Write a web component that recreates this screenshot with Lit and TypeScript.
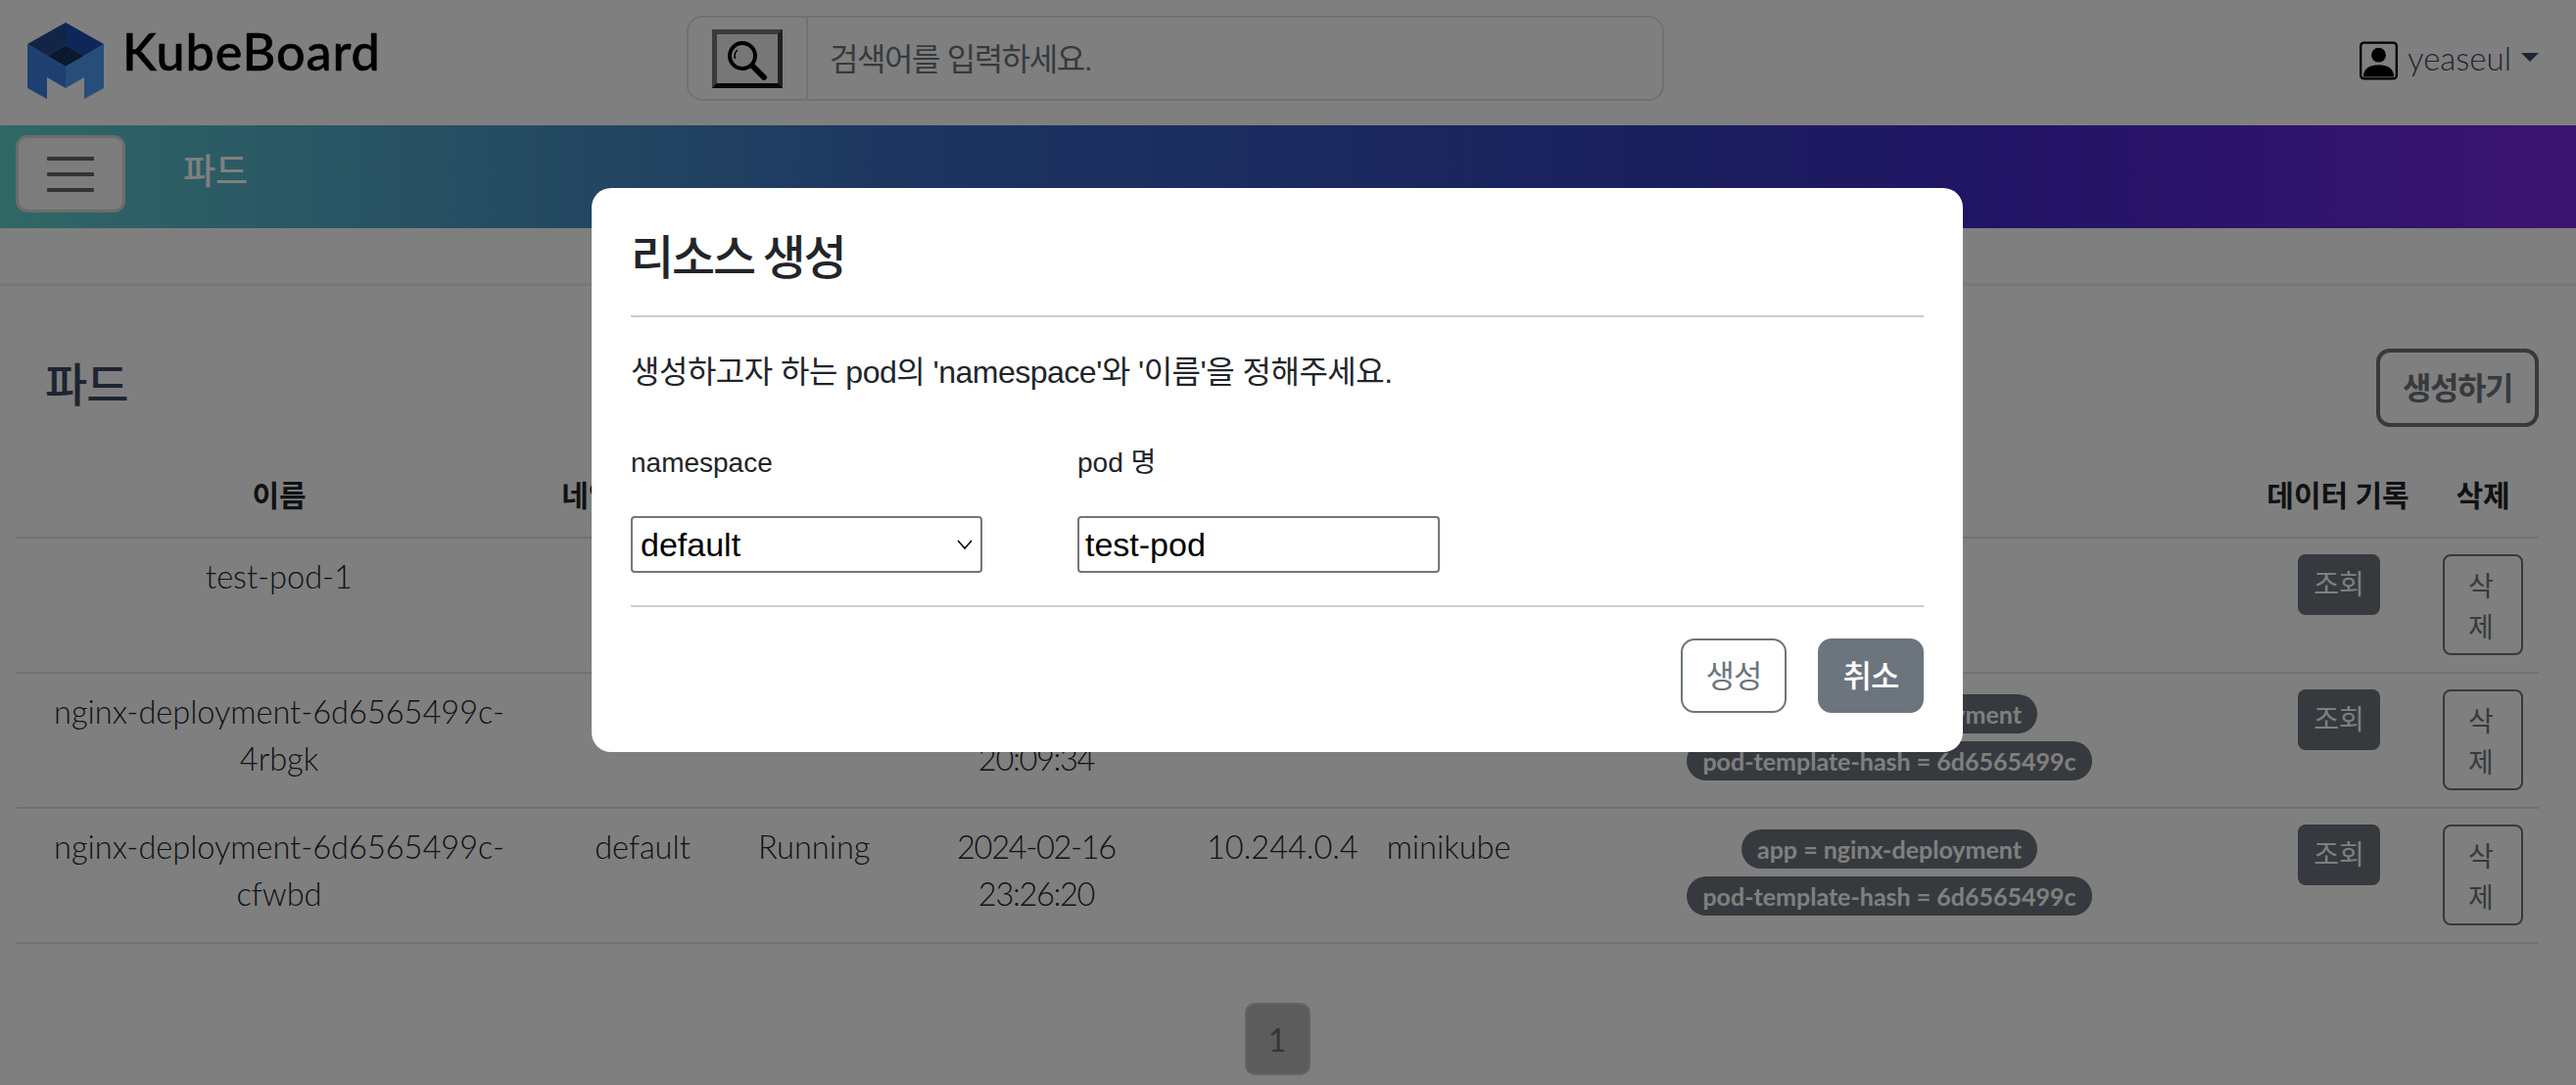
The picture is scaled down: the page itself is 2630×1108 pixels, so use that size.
import { LitElement, html, css, svg } from "lit";
import { customElement } from "lit/decorators.js";

const COLS = [538, 204, 142, 316, 180, 166, 734, 182, 114];
const HEADS = ["이름", "네임스페이스", "상태", "생성 시간", "IP", "노드", "라벨", "데이터 기록", "삭제"];
const ROWS = [
  { name: "test-pod-1", time: "2024-02-16 20:05:11", ip: "10.244.0.5", labels: [] as string[] },
  { name: "nginx-deployment-6d6565499c-4rbgk", time: "2024-02-16 20:09:34", ip: "10.244.0.3", labels: ["app = nginx-deployment", "pod-template-hash = 6d6565499c"] },
  { name: "nginx-deployment-6d6565499c-cfwbd", time: "2024-02-16 23:26:20", ip: "10.244.0.4", labels: ["app = nginx-deployment", "pod-template-hash = 6d6565499c"] },
];

const logo = svg`<svg class="logo" viewBox="26 22 84 80" width="84" height="80">
  <polygon points="67,23 67,46 48,57 28,45" fill="#24488f"/>
  <polygon points="67,23 106,45 86,57 67,46" fill="#1e4cb2"/>
  <polygon points="67,46 86,57 67,68 48,57" fill="#14345c"/>
  <polygon points="28,45 67,68 67,90 48,79 48,101 28,90" fill="#3a80e0"/>
  <polygon points="106,45 67,68 67,90 86,79 86,101 106,90" fill="#4c9cf0"/>
</svg>`;

const lens = svg`<svg viewBox="0 0 48 48" width="48" height="48">
  <circle cx="19" cy="21" r="13" fill="none" stroke="#000" stroke-width="4"/>
  <path d="M11.500 24a8.500 8.500 0 0 1 2.500-9" fill="none" stroke="#000" stroke-width="1.5"/>
  <path d="M29 31 41 43" stroke="#000" stroke-width="6" stroke-linecap="round"/>
</svg>`;

const person = svg`<svg viewBox="0 0 40 40" width="39" height="40">
  <rect x="1.200" y="1.200" width="37.600" height="37.600" rx="3.500" fill="none" stroke="#000" stroke-width="2.400"/>
  <circle cx="20" cy="14" r="7.600" fill="#000"/>
  <path d="M4 37c0-9 7-12.600 16-12.600S36 28 36 37z" fill="#000"/>
</svg>`;

@customElement("app-root")
export class AppRoot extends LitElement {
  static styles = css`
    :host {
      display: block;
      position: relative;
      width: 2630px;
      height: 1108px;
      overflow: hidden;
      background: #fff;
      font-family: Lato, "Noto Sans CJK KR", sans-serif;
      color: #212529;
    }
    .topbar {
      height: 128px;
      display: flex;
      align-items: flex-start;
      box-sizing: border-box;
    }
    .brand {
      display: flex;
      align-items: flex-start;
      width: 701px;
      flex: none;
      padding: 22px 0 0 26px;
      box-sizing: border-box;
    }
    .brand-name {
      font-size: 52px;
      line-height: 54px;
      font-weight: 500;
      color: #000;
      margin: 3px 0 0 15px;
      letter-spacing: 1px;
      -webkit-text-stroke: 0.6px #000;
    }
    .search {
      margin-top: 16px;
      width: 998px;
      height: 87px;
      flex: none;
      box-sizing: border-box;
      border: 2px solid #dee2e6;
      border-radius: 16px;
      display: flex;
      align-items: stretch;
    }
    .search-btn-wrap {
      width: 120px;
      flex: none;
      border-right: 2px solid #dee2e6;
      display: flex;
      align-items: center;
      justify-content: center;
    }
    .search-btn {
      width: 72px;
      height: 60px;
      box-sizing: border-box;
      border: 5px solid;
      border-color: #767676 #404040 #0e0e0e #767676;
      background: #efefef;
      padding: 0;
      display: flex;
      align-items: center;
      justify-content: center;
    }
    .search-ph {
      padding-left: 22px;
      padding-bottom: 3px;
      display: flex;
      align-items: center;
      font-size: 32px;
      letter-spacing: -1.400px;
      color: #6c757d;
      font-family: "Liberation Sans", "Noto Sans CJK KR", sans-serif;
    }
    .user {
      margin-left: auto;
      margin-right: 38px;
      margin-top: 42px;
      display: flex;
      align-items: center;
      height: 40px;
      color: #3c4b64;
      font-size: 33px;
      font-weight: 300;
    }
    .user span { margin-left: 10px; line-height: 34px; height: 40px; }
    .caret {
      width: 0;
      height: 0;
      margin-left: 10px;
      margin-bottom: 8px;
      border-left: 9px solid transparent;
      border-right: 9px solid transparent;
      border-top: 9px solid #3c4b64;
    }
    .nav {
      height: 105px;
      display: flex;
      align-items: flex-start;
      background: linear-gradient(90deg, #60d0cc 0%, #3a6cc0 35%, #3440bc 64%, #4428cc 78%, #7828e0 100%);
    }
    .toggler {
      margin: 10px 0 0 16px;
      width: 112px;
      height: 79px;
      box-sizing: border-box;
      background: #f8f8f8;
      border: 3px solid #d8d8d8;
      border-radius: 12px;
      display: flex;
      flex-direction: column;
      align-items: center;
      justify-content: center;
      gap: 12px;
    }
    .toggler i {
      display: block;
      width: 48px;
      height: 4px;
      border-radius: 1px;
      background: #666;
    }
    .nav-title {
      margin: 21px 0 0 59px;
      font-size: 36px;
      line-height: 50px;
      color: #fff;
      font-weight: 500;
    }
    .band {
      height: 59px;
      box-sizing: border-box;
      border-bottom: 3px solid #f0f0f0;
    }
    main {
      width: 2576px;
      margin-left: 16px;
      padding-top: 64px;
    }
    .title-row {
      height: 80px;
      display: flex;
      justify-content: space-between;
      align-items: center;
    }
    h1 {
      margin: 0 0 9px 30px;
      font-size: 47px;
      line-height: 60px;
      font-weight: 500;
      color: #3c4b64;
      letter-spacing: -1px;
    }
    .create {
      width: 166px;
      height: 80px;
      box-sizing: border-box;
      border: 4px solid #6c757d;
      border-radius: 14px;
      background: #fff;
      color: #6c757d;
      font: 700 32px "Noto Sans CJK KR", sans-serif;
      letter-spacing: -1.500px;
      padding: 0 0 4px;
    }
    table {
      width: 100%;
      margin-top: 38px;
      border-collapse: collapse;
      table-layout: fixed;
    }
    th {
      height: 75px;
      box-sizing: border-box;
      padding: 0 0 19px;
      vertical-align: bottom;
      font-size: 30px;
      line-height: 48px;
      font-weight: 700;
      white-space: nowrap;
      border-bottom: 2px solid #dee2e6;
      color: #212529;
    }
    td {
      height: 138px;
      box-sizing: border-box;
      padding: 15px 16px 0;
      vertical-align: top;
      text-align: center;
      font-size: 32.500px;
      line-height: 48px;
      font-weight: 300;
      border-bottom: 2px solid #dee2e6;
      color: #212529;
    }
    td.date { letter-spacing: -1.300px; padding-left: 40px; padding-right: 40px; }
    td.labels { padding-top: 0; }
    td.acts { padding: 16px 0 0; }
    .pills { padding-top: 13px; }
    .pill {
      display: block;
      width: fit-content;
      margin: 8px auto 0;
      height: 40px;
      line-height: 40px;
      padding: 0 16px;
      border-radius: 20px;
      background: #6c757d;
      color: #fff;
      font-size: 25px;
      font-weight: 700;
      white-space: nowrap;
    }
    .view {
      width: 84px;
      height: 62px;
      box-sizing: border-box;
      border: 0;
      border-radius: 8px;
      background: #6c757d;
      color: #fff;
      font: 400 28px/1.5 "Noto Sans CJK KR", sans-serif;
      padding: 0 0 4px;
      margin-left: 2px;
    }
    .del {
      width: 82px;
      height: 103px;
      box-sizing: border-box;
      border: 2px solid #6c757d;
      border-radius: 8px;
      background: #fff;
      color: #6c757d;
      font: 400 28px/42px "Noto Sans CJK KR", sans-serif;
      padding: 0 24px 0 20px;
    }
    .pager {
      margin-top: 60px;
      display: flex;
      justify-content: center;
    }
    .page {
      width: 67px;
      height: 74px;
      box-sizing: border-box;
      border: 2px solid #c8c8c8;
      border-radius: 10px;
      background: #b8b8b8;
      color: #6c6c6c;
      font-size: 32px;
      display: flex;
      align-items: center;
      justify-content: center;
    }
    .backdrop {
      position: absolute;
      inset: 0;
      background: rgba(0, 0, 0, 0.5);
    }
    .modal {
      position: absolute;
      left: 604px;
      top: 192px;
      width: 1400px;
      height: 576px;
      box-sizing: border-box;
      padding: 0 40px;
      background: #fff;
      border-radius: 20px;
      font-family: "Liberation Sans", "Noto Sans CJK KR", sans-serif;
      color: #212529;
    }
    .modal-head {
      height: 132px;
      box-sizing: border-box;
      border-bottom: 2px solid #ccc;
      padding-top: 35px;
    }
    h2 {
      margin: 0;
      font-size: 48px;
      line-height: 64px;
      font-weight: 500;
      font-family: "Noto Sans CJK KR", sans-serif;
      letter-spacing: -2.200px;
    }
    .modal-body { height: 296px; box-sizing: border-box; padding-top: 32px; border-bottom: 2px solid #ccc; }
    .desc { margin: 0; font-size: 32px; line-height: 48px; letter-spacing: -0.500px; }
    .fields {
      display: flex;
      margin-top: 48px;
    }
    .field { display: flex; flex-direction: column; }
    .field.ns { width: 456px; }
    .field label { font-size: 28px; line-height: 42px; height: 75px; }
    .select {
      width: 359px;
      height: 58px;
      box-sizing: border-box;
      border: 2px solid #767676;
      border-radius: 4px;
      font-size: 34px;
      color: #000;
      display: flex;
      align-items: center;
      justify-content: space-between;
      padding: 0 7px 0 8px;
      font-family: "Liberation Sans", sans-serif;
    }
    .input {
      width: 370px;
      height: 58px;
      box-sizing: border-box;
      border: 2px solid #767676;
      border-radius: 4px;
      font: 34px "Liberation Sans", sans-serif;
      color: #000;
      padding: 0 6px;
      outline: none;
    }
    .foot {
      display: flex;
      justify-content: flex-end;
      gap: 32px;
      padding-top: 32px;
    }
    .btn {
      width: 108px;
      height: 76px;
      box-sizing: border-box;
      border: 2px solid #6c757d;
      border-radius: 14px;
      font: 400 32px "Noto Sans CJK KR", sans-serif;
      letter-spacing: -1px;
      padding: 0 0 4px;
      background: #fff;
      color: #6c757d;
    }
    .btn.solid { background: #6c757d; color: #fff; font-weight: 500; }
  `;

  render() {
    return html`
      <div class="topbar">
        <div class="brand">${logo}<div class="brand-name">KubeBoard</div></div>
        <div class="search">
          <div class="search-btn-wrap"><button class="search-btn">${lens}</button></div>
          <div class="search-ph">검색어를 입력하세요.</div>
        </div>
        <div class="user">${person}<span>yeaseul</span><div class="caret"></div></div>
      </div>
      <div class="nav">
        <div class="toggler"><i></i><i></i><i></i></div>
        <div class="nav-title">파드</div>
      </div>
      <div class="band"></div>
      <main>
        <div class="title-row"><h1>파드</h1><button class="create">생성하기</button></div>
        <table>
          <colgroup>${COLS.map((w) => html`<col style="width:${w}px" />`)}</colgroup>
          <thead><tr>${HEADS.map((h) => html`<th>${h}</th>`)}</tr></thead>
          <tbody>
            ${ROWS.map(
              (r) => html`<tr>
                <td>${r.name}</td>
                <td>default</td>
                <td>Running</td>
                <td class="date">${r.time}</td>
                <td>${r.ip}</td>
                <td>minikube</td>
                <td class="labels"><div class="pills">${r.labels.map((l) => html`<span class="pill">${l}</span>`)}</div></td>
                <td class="acts"><button class="view">조회</button></td>
                <td class="acts"><button class="del">삭제</button></td>
              </tr>`
            )}
          </tbody>
        </table>
        <div class="pager"><div class="page">1</div></div>
      </main>
      <div class="backdrop"></div>
      <div class="modal">
        <div class="modal-head"><h2>리소스 생성</h2></div>
        <div class="modal-body">
          <p class="desc">생성하고자 하는 pod의 'namespace'와 '이름'을 정해주세요.</p>
          <div class="fields">
            <div class="field ns">
              <label>namespace</label>
              <div class="select">default
                <svg width="18" height="12" viewBox="0 0 18 12"><path d="M2 2 9 10 16 2" fill="none" stroke="#000" stroke-width="1.500"/></svg>
              </div>
            </div>
            <div class="field">
              <label>pod 명</label>
              <input class="input" .value=${"test-pod"} />
            </div>
          </div>
        </div>
        <div class="foot">
          <button class="btn">생성</button>
          <button class="btn solid">취소</button>
        </div>
      </div>
    `;
  }
}
